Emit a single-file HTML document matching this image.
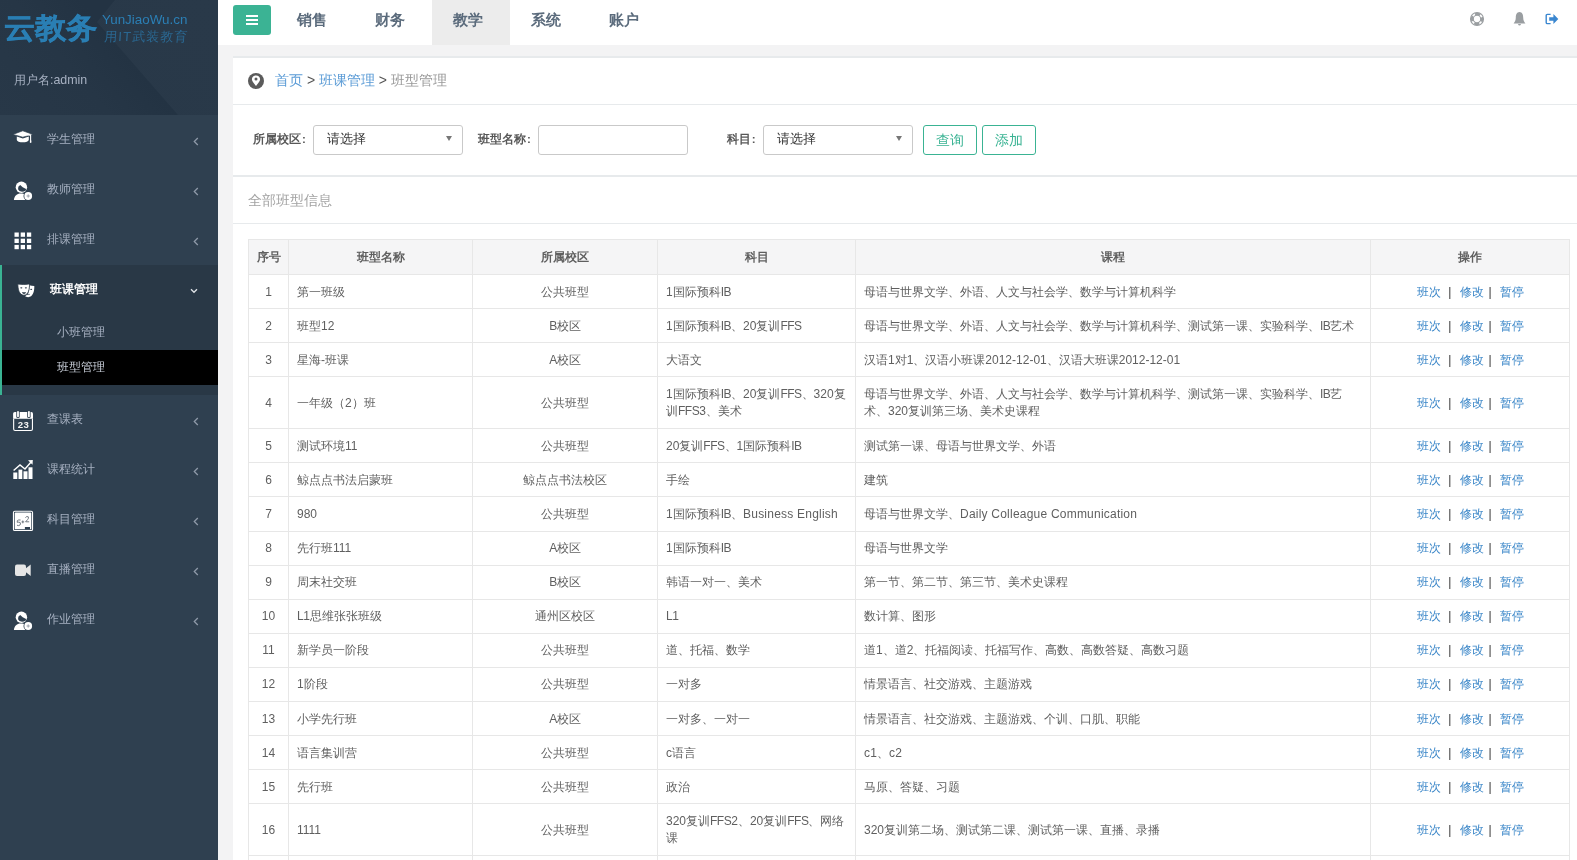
<!DOCTYPE html>
<html><head><meta charset="utf-8">
<style>
*{box-sizing:border-box;margin:0;padding:0}
html,body{width:1577px;height:860px;overflow:hidden;background:#f3f3f4;font-family:"Liberation Sans",sans-serif;}
body{-webkit-font-smoothing:antialiased}
#wrap{position:absolute;left:0;top:0;width:1577px;height:860px;will-change:transform}
.abs{position:absolute}
#side{position:absolute;left:0;top:0;width:218px;height:860px;background:#2f4050;overflow:hidden}
#hdr{position:absolute;left:0;top:0;width:218px;height:115px;background:linear-gradient(50deg,#283848 0%,#263646 35%,#233343 56.5%)}
#hdr2{position:absolute;left:0;top:0;width:218px;height:115px;background:linear-gradient(50deg,#283848 0%,#293949 100%);clip-path:polygon(115px 0,218px 0,218px 115px,178px 115px,97px 22px)}
.logo{position:absolute;left:4px;top:7px;font-size:31px;line-height:40px;font-weight:bold;color:#2a7fb4;white-space:nowrap;transform:scaleY(0.93);transform-origin:0 100%;-webkit-text-stroke:0.5px #2a7fb4}
.site{position:absolute;left:102px;top:11.5px;font-size:13.4px;color:#2b7fb5;white-space:nowrap}
.slog{position:absolute;left:104px;top:28px;font-size:13px;color:#2b80b8;opacity:0.65;letter-spacing:1.2px;white-space:nowrap;transform:skewX(-4deg)}
.user{position:absolute;left:14px;top:71.5px;font-size:12.4px;color:#a7b1c2;white-space:nowrap}
.mi{position:absolute;left:0;width:218px;height:50px}
.mi .t{position:absolute;left:47px;top:16px;font-size:12px;line-height:17px;color:#a7b1c2;white-space:nowrap}
.mi svg.ic{position:absolute}
.chev{position:absolute;left:193px;top:22px}
#top{position:absolute;left:218px;top:0;width:1359px;height:45px;background:#fff}
.nv{position:absolute;top:-3px;height:45px;font-size:15px;font-weight:bold;color:#5b6b7c;line-height:45px;white-space:nowrap}
.panel{position:absolute;left:233px;width:1344px;background:#fff}
.lab{position:absolute;font-size:11.6px;font-weight:bold;color:#585858;white-space:nowrap;line-height:14px;letter-spacing:0.1px}.lab b{margin-left:0.5px}
.sel{position:absolute;top:125px;width:150px;height:30px;border:1px solid #c9c9c9;border-radius:3px;background:#fff}
.sel span{position:absolute;left:13px;top:5px;font-size:13px;color:#333;line-height:16px}
.sel i{position:absolute;left:132px;top:10px;width:0;height:0;border-left:3.5px solid transparent;border-right:3.5px solid transparent;border-top:5px solid #777}
.btn{position:absolute;top:125px;width:54px;height:30px;border:1px solid #3ab393;border-radius:3px;color:#3ab393;font-size:14px;line-height:28px;text-align:center}
table{position:absolute;left:248px;top:239px;border-collapse:collapse;table-layout:fixed;width:1321px}
td,th{border:1px solid #e7e7e7;font-size:12px;color:#5f5f5f;padding:0 8px;line-height:17px;vertical-align:middle;overflow:hidden;white-space:nowrap}
th{background:#f5f5f6;font-weight:bold;text-align:center;height:35px}
td{height:34.1px;padding-top:1px}
td.c{text-align:center}
.l{letter-spacing:-0.5px}.lw{letter-spacing:0.22px}
tr.tall td{height:52px}
a{color:#3a86c8;text-decoration:none}
.ops{text-align:center}
.ow{display:inline-block;position:relative;width:107px;height:17px;vertical-align:top}.ow a,.ow .pp{position:absolute;top:0}.pp{color:#333}
</style></head><body><div id="wrap">
<div id="side">
  <div id="hdr"></div><div id="hdr2"></div>
  <div class="logo">云教务</div>
  <div class="site">YunJiaoWu.cn</div>
  <div class="slog">用IT武装教育</div>
  <div class="user">用户名:admin</div>
<div class="mi" style="top:115px"><svg class="ic" style="left:8px;top:10px" width="32" height="30" viewBox="0 0 32 30"><path d="M8.8 11.4 V14.8 C8.8 18.2 20.8 18.2 20.8 14.8 V11.4 L14.8 13.4 Z" fill="#fff"/><path d="M4.9 9.4 L14.8 5.8 L25 9.4 L14.8 12.2 Z" fill="#fff" stroke="#2f4050" stroke-width="0.7"/><path d="M15 9.2 L22.6 10.2 V17.2" stroke="#fff" stroke-width="1.1" fill="none"/><path d="M21.9 15.5 H23.3 V17.8 H21.9Z" fill="#fff"/></svg><div class="t">学生管理</div><svg class="chev" width="6" height="9" viewBox="0 0 6 9"><path d="M4.8 1 L1.3 4.5 L4.8 8" stroke="#8e99a9" stroke-width="1.3" fill="none"/></svg></div>
<div class="mi" style="top:165px"><svg class="ic" style="left:8px;top:10px" width="32" height="30" viewBox="0 0 32 30"><circle cx="13.4" cy="12.2" r="5.7" fill="#fff"/><path d="M10.1 13.3 L10.5 11.5 L12.2 9.9 L14.7 12.2 L18.1 14 L17.8 15.4 L16 16.4 L14 16.7 L11.5 16 L10.3 14.7Z" fill="#2f4050"/><path d="M5.9 25 C6.3 20.8 9 18.6 12.6 18.6 C14.6 18.6 16.2 19 17.3 19.7 L17.3 25 Z" fill="#fff"/><circle cx="20.2" cy="21" r="4.7" fill="#2f4050"/><circle cx="20.2" cy="21" r="3.9" fill="#fff"/><path d="M20.2 19.4 V22.6 M18.6 21 H21.8" stroke="#98a0ab" stroke-width="1"/></svg><div class="t">教师管理</div><svg class="chev" width="6" height="9" viewBox="0 0 6 9"><path d="M4.8 1 L1.3 4.5 L4.8 8" stroke="#8e99a9" stroke-width="1.3" fill="none"/></svg></div>
<div class="mi" style="top:215px"><svg class="ic" style="left:14px;top:17px" width="18" height="18" viewBox="0 0 18 18"><g fill="#fff"><rect x="0.5" y="0.5" width="4.3" height="4.3"/><rect x="6.7" y="0.5" width="4.3" height="4.3"/><rect x="12.9" y="0.5" width="4.3" height="4.3"/><rect x="0.5" y="6.7" width="4.3" height="4.3"/><rect x="6.7" y="6.7" width="4.3" height="4.3"/><rect x="12.9" y="6.7" width="4.3" height="4.3"/><rect x="0.5" y="12.9" width="4.3" height="4.3"/><rect x="6.7" y="12.9" width="4.3" height="4.3"/><rect x="12.9" y="12.9" width="4.3" height="4.3"/></g></svg><div class="t">排课管理</div><svg class="chev" width="6" height="9" viewBox="0 0 6 9"><path d="M4.8 1 L1.3 4.5 L4.8 8" stroke="#8e99a9" stroke-width="1.3" fill="none"/></svg></div>
<div class="mi" style="top:395px"><svg class="ic" style="left:8px;top:10px" width="32" height="30" viewBox="0 0 32 30"><path d="M5.1 8.8 Q5.1 7.1 6.8 7.1 H23.3 Q25 7.1 25 8.8 V13.8 H5.1Z" fill="#fff"/><rect x="8.3" y="5.6" width="3.4" height="7.3" rx="1.2" fill="#2f4050"/><rect x="9.1" y="6.1" width="1.8" height="6.2" rx="0.8" fill="#fff"/><rect x="19.2" y="5.6" width="3.4" height="7.3" rx="1.2" fill="#2f4050"/><rect x="20" y="6.1" width="1.8" height="6.2" rx="0.8" fill="#fff"/><path d="M5.65 13.8 V24 Q5.65 25.45 7.1 25.45 H23 Q24.45 25.45 24.45 24 V13.8" stroke="#fff" stroke-width="1.1" fill="none"/><text x="15.4" y="23" text-anchor="middle" font-family="Liberation Sans" font-weight="bold" font-size="9.6" fill="#f4f4f4" letter-spacing="0.3">23</text></svg><div class="t">查课表</div><svg class="chev" width="6" height="9" viewBox="0 0 6 9"><path d="M4.8 1 L1.3 4.5 L4.8 8" stroke="#8e99a9" stroke-width="1.3" fill="none"/></svg></div>
<div class="mi" style="top:445px"><svg class="ic" style="left:13px;top:15px" width="21" height="20" viewBox="0 0 21 20"><path d="M0.6 10.5 L7 5 L12 9 L18.5 1.5" stroke="#fff" stroke-width="1.4" fill="none"/><path d="M15 0.3 L19.8 0 L19.5 4.8Z" fill="#fff"/><rect x="0.3" y="12.5" width="4" height="6.5" fill="#fff"/><rect x="5.5" y="9.6" width="3.8" height="9.4" fill="#fff"/><rect x="10.5" y="11.3" width="4" height="7.7" fill="#fff"/><rect x="15.5" y="7.3" width="4" height="11.7" fill="#fff"/></svg><div class="t">课程统计</div><svg class="chev" width="6" height="9" viewBox="0 0 6 9"><path d="M4.8 1 L1.3 4.5 L4.8 8" stroke="#8e99a9" stroke-width="1.3" fill="none"/></svg></div>
<div class="mi" style="top:495px"><svg class="ic" style="left:8px;top:10px" width="32" height="30" viewBox="0 0 32 30"><rect x="5.45" y="6.3" width="19.1" height="19.2" rx="1.3" fill="none" stroke="#fff" stroke-width="1.1"/><rect x="6.7" y="7.6" width="16.6" height="16.7" rx="0.9" fill="#fff"/><path d="M12.6 15 Q10.5 14.6 9.4 15.6 L9.2 17.3 Q11 16.8 12.2 17.6 Q13 19 11.8 20.2 Q10.5 21 9 20.2 M14.8 15.5 V18.3 M13.5 16.9 H16.2 M17.4 12.6 Q18.8 10.8 20.3 11.8 Q21 13.2 19.6 14.6 L17.6 16.8 H21.2" stroke="#5a636d" stroke-width="0.85" fill="none"/><rect x="16.9" y="22" width="5.1" height="2.5" fill="#2f4050"/></svg><div class="t">科目管理</div><svg class="chev" width="6" height="9" viewBox="0 0 6 9"><path d="M4.8 1 L1.3 4.5 L4.8 8" stroke="#8e99a9" stroke-width="1.3" fill="none"/></svg></div>
<div class="mi" style="top:545px"><svg class="ic" style="left:15px;top:19px" width="16" height="13" viewBox="0 0 16 13"><rect x="0" y="0.5" width="11" height="11.5" rx="2" fill="#e6e6e6"/><path d="M10 5 L15.7 0.6 V12 L10 7.5Z" fill="#e6e6e6"/></svg><div class="t">直播管理</div><svg class="chev" width="6" height="9" viewBox="0 0 6 9"><path d="M4.8 1 L1.3 4.5 L4.8 8" stroke="#8e99a9" stroke-width="1.3" fill="none"/></svg></div>
<div class="mi" style="top:595px"><svg class="ic" style="left:8px;top:10px" width="32" height="30" viewBox="0 0 32 30"><circle cx="13.4" cy="12.2" r="5.7" fill="#fff"/><path d="M10.1 13.3 L10.5 11.5 L12.2 9.9 L14.7 12.2 L18.1 14 L17.8 15.4 L16 16.4 L14 16.7 L11.5 16 L10.3 14.7Z" fill="#2f4050"/><path d="M5.9 25 C6.3 20.8 9 18.6 12.6 18.6 C14.6 18.6 16.2 19 17.3 19.7 L17.3 25 Z" fill="#fff"/><circle cx="20.2" cy="21" r="4.7" fill="#2f4050"/><circle cx="20.2" cy="21" r="3.9" fill="#fff"/><path d="M20.2 19.4 V22.6 M18.6 21 H21.8" stroke="#98a0ab" stroke-width="1"/></svg><div class="t">作业管理</div><svg class="chev" width="6" height="9" viewBox="0 0 6 9"><path d="M4.8 1 L1.3 4.5 L4.8 8" stroke="#8e99a9" stroke-width="1.3" fill="none"/></svg></div>
<div class="abs" style="left:0;top:265px;width:218px;height:130px;background:#293846;border-left:2px solid #3ab393"></div>
<div class="mi" style="top:265px"><svg class="ic" style="left:10px;top:10px" width="32" height="30" viewBox="0 0 32 30"><path d="M19.3 10.3 Q21.6 11 24.3 11.1 C24.5 16.5 22.8 22.2 18.2 22.2 C16.6 22.2 15.6 21.6 15.1 21 C18 20.2 19.5 16.8 19.3 10.3Z" fill="#fff"/><path d="M7.85 9.1 Q13.6 9.9 19.5 8.9 C19.6 14 18.5 20.2 13.8 20.2 C9.2 20.2 7.8 14 7.85 9.1 Z" fill="#fff" stroke="#293846" stroke-width="0.8"/><g fill="#293846"><ellipse cx="11.3" cy="12.8" rx="1.1" ry="0.65"/><ellipse cx="15.9" cy="12.8" rx="1.1" ry="0.65"/><path d="M11.9 17 Q14 17.6 16.1 17 Q15.6 18.9 14 18.9 Q12.4 18.9 11.9 17Z"/><ellipse cx="21.2" cy="14.3" rx="1" ry="0.6"/><path d="M16.8 19.6 Q18.3 18.3 19.8 19.1 L19.6 19.7 Q18.3 19.3 17.2 20Z"/></g></svg><div class="t" style="left:50px;color:#fff;font-weight:bold">班课管理</div><svg class="chev" style="left:190px;top:23px" width="8" height="6" viewBox="0 0 8 6"><path d="M1 1.2 L4 4.3 L7 1.2" stroke="#dfe3e8" stroke-width="1.3" fill="none"/></svg></div>
<div class="abs" style="left:57px;top:324px;font-size:12px;line-height:17px;color:#a7b1c2">小班管理</div>
<div class="abs" style="left:2px;top:350px;width:216px;height:35px;background:#000"></div>
<div class="abs" style="left:57px;top:359px;font-size:12px;line-height:17px;color:#c8ced8">班型管理</div>
</div>
<div id="top">
<div class="abs" style="left:15px;top:5px;width:38px;height:30px;background:#3bb394;border-radius:3px"></div>
<div class="abs" style="left:28px;top:15px;width:12px;height:2px;background:#fff"></div>
<div class="abs" style="left:28px;top:19px;width:12px;height:2px;background:#fff"></div>
<div class="abs" style="left:28px;top:23px;width:12px;height:2px;background:#fff"></div>
<div class="abs" style="left:214px;top:0;width:78px;height:45px;background:#ececec"></div>
<div class="nv" style="left:79px">销售</div>
<div class="nv" style="left:157px">财务</div>
<div class="nv" style="left:235px">教学</div>
<div class="nv" style="left:313px">系统</div>
<div class="nv" style="left:391px">账户</div>
<svg class="abs" style="left:1250.8px;top:10.9px" width="16" height="16" viewBox="0 0 16 16"><circle cx="8" cy="8" r="6.5" stroke="#9a9ea1" stroke-width="1.1" fill="none"/><circle cx="8" cy="8" r="3.7" stroke="#9a9ea1" stroke-width="1.1" fill="none"/><circle cx="8" cy="8" r="5.1" stroke="#9a9ea1" stroke-width="2.4" fill="none" stroke-dasharray="5.3 2.71" stroke-dashoffset="2.65"/></svg>
<svg class="abs" style="left:1295px;top:12px" width="13" height="14" viewBox="0 0 13 14"><path d="M6.5 0 C9.2 0.2 10.2 2.6 10.2 5.5 C10.2 8.5 11.2 10 12.4 11.4 H0.6 C1.8 10 2.8 8.5 2.8 5.5 C2.8 2.6 3.8 0.2 6.5 0Z" fill="#9a9ea1"/><path d="M5 12 H8 Q7.6 13.6 6.5 13.6 Q5.4 13.6 5 12Z" fill="#9a9ea1"/></svg>
<svg class="abs" style="left:1327px;top:13px" width="15" height="12" viewBox="0 0 15 12"><path d="M5.6 1.4 H2.4 Q1.2 1.4 1.2 2.6 V9.4 Q1.2 10.6 2.4 10.6 H5.6" stroke="#3a87d0" stroke-width="1.4" fill="none"/><path d="M4.2 4.3 H8.4 V1 L13.3 6 L8.4 11 V7.7 H4.2Z" fill="#3a87d0"/></svg>
</div>
<div class="panel" style="top:56px;height:49px;border-top:2px solid #e7eaec;border-bottom:1px solid #e7eaec">
<svg class="abs" style="left:15px;top:15px" width="16" height="16" viewBox="0 0 16 16"><circle cx="8" cy="8" r="8" fill="#5b5b5b"/><path d="M8 12.9 C5.8 10.2 3.9 8.3 3.9 6.2 C3.9 3.9 5.7 2.5 8 2.5 C10.3 2.5 12.1 3.9 12.1 6.2 C12.1 8.3 10.2 10.2 8 12.9Z" fill="#fff"/><circle cx="8" cy="6.1" r="1.5" fill="#5b5b5b"/></svg>
<div class="abs" style="left:42px;top:12px;font-size:14px;line-height:20px;white-space:nowrap;color:#999"><a style="color:#5a9bd6">首页</a> <span style="color:#555">&gt;</span> <a style="color:#5a9bd6">班课管理</a> <span style="color:#555">&gt;</span> 班型管理</div>
</div>
<div class="panel" style="top:105px;height:70px"></div>
<div class="lab" style="left:253px;top:132px">所属校区<b>:</b></div>
<div class="sel" style="left:313px"><span>请选择</span><i></i></div>
<div class="lab" style="left:478px;top:132px">班型名称<b>:</b></div>
<div class="sel" style="left:538px"></div>
<div class="lab" style="left:727px;top:132px">科目<b>:</b></div>
<div class="sel" style="left:763px"><span>请选择</span><i></i></div>
<div class="btn" style="left:923px">查询</div>
<div class="btn" style="left:982px">添加</div>
<div class="panel" style="top:175px;height:685px;border-top:2px solid #e7eaec"></div>
<div class="abs" style="left:233px;top:223px;width:1344px;height:1px;background:#e7eaec"></div>
<div class="abs" style="left:248px;top:190px;font-size:14px;line-height:20px;color:#a3a3a3;white-space:nowrap">全部班型信息</div>
<table><colgroup><col style="width:40px"><col style="width:184px"><col style="width:185px"><col style="width:198px"><col style="width:515px"><col style="width:199px"></colgroup>
<tr><th>序号</th><th>班型名称</th><th>所属校区</th><th>科目</th><th>课程</th><th>操作</th></tr>
<tr><td class="c">1</td><td>第一班级</td><td class="c">公共班型</td><td>1国际预科<span class="l">IB</span></td><td>母语与世界文学、外语、人文与社会学、数学与计算机科学</td><td class="ops"><span class="ow"><a style="left:0">班次</a><span class="pp" style="left:31.8px">|</span><a style="left:43px">修改</a><span class="pp" style="left:71.9px">|</span><a style="left:83.1px">暂停</a></span></td></tr>
<tr><td class="c">2</td><td>班型12</td><td class="c"><span class="l">B</span>校区</td><td>1国际预科<span class="l">IB</span>、20复训<span class="l">FFS</span></td><td>母语与世界文学、外语、人文与社会学、数学与计算机科学、测试第一课、实验科学、<span class="l">IB</span>艺术</td><td class="ops"><span class="ow"><a style="left:0">班次</a><span class="pp" style="left:31.8px">|</span><a style="left:43px">修改</a><span class="pp" style="left:71.9px">|</span><a style="left:83.1px">暂停</a></span></td></tr>
<tr><td class="c">3</td><td>星海-班课</td><td class="c"><span class="l">A</span>校区</td><td>大语文</td><td>汉语1对1、汉语小班课2012-12-01、汉语大班课2012-12-01</td><td class="ops"><span class="ow"><a style="left:0">班次</a><span class="pp" style="left:31.8px">|</span><a style="left:43px">修改</a><span class="pp" style="left:71.9px">|</span><a style="left:83.1px">暂停</a></span></td></tr>
<tr class="tall"><td class="c">4</td><td>一年级（2）班</td><td class="c">公共班型</td><td>1国际预科<span class="l">IB</span>、20复训<span class="l">FFS</span>、320复<br>训<span class="l">FFS</span>3、美术</td><td>母语与世界文学、外语、人文与社会学、数学与计算机科学、测试第一课、实验科学、<span class="l">IB</span>艺<br>术、320复训第三场、美术史课程</td><td class="ops"><span class="ow"><a style="left:0">班次</a><span class="pp" style="left:31.8px">|</span><a style="left:43px">修改</a><span class="pp" style="left:71.9px">|</span><a style="left:83.1px">暂停</a></span></td></tr>
<tr><td class="c">5</td><td>测试环境11</td><td class="c">公共班型</td><td>20复训<span class="l">FFS</span>、1国际预科<span class="l">IB</span></td><td>测试第一课、母语与世界文学、外语</td><td class="ops"><span class="ow"><a style="left:0">班次</a><span class="pp" style="left:31.8px">|</span><a style="left:43px">修改</a><span class="pp" style="left:71.9px">|</span><a style="left:83.1px">暂停</a></span></td></tr>
<tr><td class="c">6</td><td>鲸点点书法启蒙班</td><td class="c">鲸点点书法校区</td><td>手绘</td><td>建筑</td><td class="ops"><span class="ow"><a style="left:0">班次</a><span class="pp" style="left:31.8px">|</span><a style="left:43px">修改</a><span class="pp" style="left:71.9px">|</span><a style="left:83.1px">暂停</a></span></td></tr>
<tr><td class="c">7</td><td>980</td><td class="c">公共班型</td><td>1国际预科<span class="l">IB</span>、<span class="lw">Business English</span></td><td>母语与世界文学、<span class="lw">Daily Colleague Communication</span></td><td class="ops"><span class="ow"><a style="left:0">班次</a><span class="pp" style="left:31.8px">|</span><a style="left:43px">修改</a><span class="pp" style="left:71.9px">|</span><a style="left:83.1px">暂停</a></span></td></tr>
<tr><td class="c">8</td><td>先行班111</td><td class="c"><span class="l">A</span>校区</td><td>1国际预科<span class="l">IB</span></td><td>母语与世界文学</td><td class="ops"><span class="ow"><a style="left:0">班次</a><span class="pp" style="left:31.8px">|</span><a style="left:43px">修改</a><span class="pp" style="left:71.9px">|</span><a style="left:83.1px">暂停</a></span></td></tr>
<tr><td class="c">9</td><td>周末社交班</td><td class="c"><span class="l">B</span>校区</td><td>韩语一对一、美术</td><td>第一节、第二节、第三节、美术史课程</td><td class="ops"><span class="ow"><a style="left:0">班次</a><span class="pp" style="left:31.8px">|</span><a style="left:43px">修改</a><span class="pp" style="left:71.9px">|</span><a style="left:83.1px">暂停</a></span></td></tr>
<tr><td class="c">10</td><td><span class="l">L</span>1思维张张班级</td><td class="c">通州区校区</td><td><span class="l">L</span>1</td><td>数计算、图形</td><td class="ops"><span class="ow"><a style="left:0">班次</a><span class="pp" style="left:31.8px">|</span><a style="left:43px">修改</a><span class="pp" style="left:71.9px">|</span><a style="left:83.1px">暂停</a></span></td></tr>
<tr><td class="c">11</td><td>新学员一阶段</td><td class="c">公共班型</td><td>道、托福、数学</td><td>道1、道2、托福阅读、托福写作、高数、高数答疑、高数习题</td><td class="ops"><span class="ow"><a style="left:0">班次</a><span class="pp" style="left:31.8px">|</span><a style="left:43px">修改</a><span class="pp" style="left:71.9px">|</span><a style="left:83.1px">暂停</a></span></td></tr>
<tr><td class="c">12</td><td>1阶段</td><td class="c">公共班型</td><td>一对多</td><td>情景语言、社交游戏、主题游戏</td><td class="ops"><span class="ow"><a style="left:0">班次</a><span class="pp" style="left:31.8px">|</span><a style="left:43px">修改</a><span class="pp" style="left:71.9px">|</span><a style="left:83.1px">暂停</a></span></td></tr>
<tr><td class="c">13</td><td>小学先行班</td><td class="c"><span class="l">A</span>校区</td><td>一对多、一对一</td><td>情景语言、社交游戏、主题游戏、个训、口肌、职能</td><td class="ops"><span class="ow"><a style="left:0">班次</a><span class="pp" style="left:31.8px">|</span><a style="left:43px">修改</a><span class="pp" style="left:71.9px">|</span><a style="left:83.1px">暂停</a></span></td></tr>
<tr><td class="c">14</td><td>语言集训营</td><td class="c">公共班型</td><td><span class="lw">c</span>语言</td><td><span class="lw">c</span>1、<span class="lw">c</span>2</td><td class="ops"><span class="ow"><a style="left:0">班次</a><span class="pp" style="left:31.8px">|</span><a style="left:43px">修改</a><span class="pp" style="left:71.9px">|</span><a style="left:83.1px">暂停</a></span></td></tr>
<tr><td class="c">15</td><td>先行班</td><td class="c">公共班型</td><td>政治</td><td>马原、答疑、习题</td><td class="ops"><span class="ow"><a style="left:0">班次</a><span class="pp" style="left:31.8px">|</span><a style="left:43px">修改</a><span class="pp" style="left:71.9px">|</span><a style="left:83.1px">暂停</a></span></td></tr>
<tr class="tall"><td class="c">16</td><td>1111</td><td class="c">公共班型</td><td>320复训<span class="l">FFS</span>2、20复训<span class="l">FFS</span>、网络<br>课</td><td>320复训第二场、测试第二课、测试第一课、直播、录播</td><td class="ops"><span class="ow"><a style="left:0">班次</a><span class="pp" style="left:31.8px">|</span><a style="left:43px">修改</a><span class="pp" style="left:71.9px">|</span><a style="left:83.1px">暂停</a></span></td></tr>
<tr><td class="c"></td><td></td><td class="c"></td><td></td><td></td><td class="ops"></td></tr>
</table>
<div class="abs" style="left:520px;top:820px;width:900px;height:80px;background:radial-gradient(ellipse 50% 50% at 50% 100%,rgba(0,0,0,0.045),rgba(0,0,0,0) 100%);pointer-events:none"></div>
</div></body></html>
